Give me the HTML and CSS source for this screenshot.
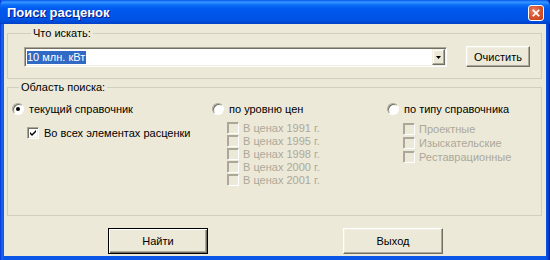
FILE: index.html
```html
<!DOCTYPE html>
<html lang="ru">
<head>
<meta charset="utf-8">
<title>Поиск расценок</title>
<link rel="stylesheet" href="styles.css">
</head>
<body>
<div class="window">
  <div class="titlebar">
    <span class="title">Поиск расценок</span>
    <span class="close">
      <svg width="16" height="16" viewBox="0 0 16 16"><path d="M5 5 L11 11 M11 5 L5 11" stroke="#fff" stroke-width="2" stroke-linecap="square"/></svg>
    </span>
  </div>
  <div class="client">
    <fieldset class="group g1">
      <legend>Что искать:</legend>
      <div class="search-row">
        <div class="combo">
          <span class="sel">10 млн. кВт</span>
          <span class="drop"><svg width="5" height="3" viewBox="0 0 5 3"><path d="M0 0H5L2.5 3Z" fill="#000"/></svg></span>
        </div>
        <button class="btn">Очистить</button>
      </div>
    </fieldset>
    <fieldset class="group g2">
      <legend>Область поиска:</legend>
      <div class="cols">
        <div class="col c1">
          <label class="opt"><span class="radio on"></span>текущий справочник</label>
          <div class="checks">
            <label class="opt"><span class="check on"><svg width="7" height="7" viewBox="0 0 7 7"><path d="M0 2 L2 4 L6 0 L6 2 L2 6 L0 4Z" fill="#000"/></svg></span>Во всех элементах расценки</label>
          </div>
        </div>
        <div class="col c2">
          <label class="opt"><span class="radio"></span>по уровню цен</label>
          <div class="checks">
            <label class="opt dis"><span class="check"></span>В ценах 1991 г.</label>
            <label class="opt dis"><span class="check"></span>В ценах 1995 г.</label>
            <label class="opt dis"><span class="check"></span>В ценах 1998 г.</label>
            <label class="opt dis"><span class="check"></span>В ценах 2000 г.</label>
            <label class="opt dis"><span class="check"></span>В ценах 2001 г.</label>
          </div>
        </div>
        <div class="col c3">
          <label class="opt"><span class="radio"></span>по типу справочника</label>
          <div class="checks">
            <label class="opt dis"><span class="check"></span>Проектные</label>
            <label class="opt dis"><span class="check"></span>Изыскательские</label>
            <label class="opt dis"><span class="check"></span>Реставрационные</label>
          </div>
        </div>
      </div>
    </fieldset>
    <div class="actions">
      <button class="btn big default">Найти</button>
      <button class="btn big">Выход</button>
    </div>
  </div>
</div>
</body>
</html>
```

FILE: styles.css
```css
html, body {
  margin: 0;
  padding: 0;
}
body {
  width: 550px;
  height: 260px;
  overflow: hidden;
  font-family: "Liberation Sans", Arial, sans-serif;
  font-size: 11px;
  color: #000;
}
.window {
  width: 550px;
  height: 260px;
  box-sizing: border-box;
  display: flex;
  flex-direction: column;
  background: linear-gradient(to right, #0831D9 0, #166AEE 2px, #0A56E6 4px, #0A56E6 546px, #0843D0 548px, #001EA0 550px);
}
.titlebar {
  height: 24px;
  flex: none;
  display: flex;
  align-items: center;
  justify-content: space-between;
  padding: 0 6px 0 7px;
  background: linear-gradient(to bottom, #0058EE 0, #3A93FF 2px, #288EFF 3px, #0A6DF7 5px, #0058EE 9px, #0055E8 16px, #0052E2 20px, #0046D0 23px, #003DC2 24px);
  border-radius: 6px 6px 0 0;
}
.title {
  color: #fff;
  font-weight: bold;
  font-size: 13px;
  text-shadow: 1px 1px #0A1883;
  margin-top: 1px;
}
.close {
  width: 16px;
  height: 16px;
  box-sizing: border-box;
  border: 1px solid #fff;
  border-radius: 3px;
  background: radial-gradient(circle at 35% 35%, #E8836A 0, #D9562F 45%, #C23F12 100%);
  display: flex;
  margin-top: 1px;
}
.close svg {
  width: 14px;
  height: 14px;
}
.client {
  flex: 1;
  margin: 0 4px 4px;
  background: #ECE9D8;
  display: flex;
  flex-direction: column;
}
.group {
  margin: 0 0 0 3px;
  width: 535px;
  box-sizing: border-box;
  border: 1px solid #D0D0BF;
  border-radius: 0;
  padding: 0;
  min-width: 0;
}
.group legend {
  margin-left: 7px;
  padding: 0 2px;
  line-height: 13px;
  font-size: 11px;
}
.g1 {
  margin-top: 3px;
  padding: 6px 0 11px 16px;
}
.search-row {
  display: flex;
  align-items: flex-start;
  gap: 19px;
}
.combo {
  width: 423px;
  height: 20px;
  margin-top: 1px;
  box-sizing: border-box;
  background: #fff;
  border: 1px solid;
  border-color: #ACA899 #fff #fff #ACA899;
  box-shadow: inset 1px 1px #716F64, inset -1px -1px #F1EFE2;
  display: flex;
  align-items: center;
  justify-content: space-between;
  padding: 0 1px 0 2px;
}
.sel {
  background: #316AC5;
  color: #fff;
  line-height: 13px;
  padding: 0 1px 0 0;
}
.drop {
  width: 13px;
  height: 16px;
  box-sizing: border-box;
  background: #ECE9D8;
  border: 1px solid;
  border-color: #F1EFE2 #716F64 #716F64 #F1EFE2;
  box-shadow: inset -1px -1px #ACA899, inset 1px 1px #fff;
  display: flex;
  align-items: center;
  justify-content: center;
}
.btn {
  font-family: "Liberation Sans", Arial, sans-serif;
  font-size: 11px;
  color: #000;
  background: #ECE9D8;
  border: 1px solid;
  border-color: #fff #716F64 #716F64 #fff;
  box-shadow: inset -1px -1px #ACA899, inset 1px 1px #F1EFE2;
  width: 64px;
  height: 21px;
  padding: 0;
  margin: 0;
  box-sizing: border-box;
}
.g2 {
  margin-top: 2px;
  height: 135px;
  padding: 9px 0 0 4px;
}
.cols {
  display: grid;
  grid-template-columns: 200px 175px 1fr;
}
.col {
  display: flex;
  flex-direction: column;
}
.opt {
  display: flex;
  align-items: center;
  gap: 5px;
  height: 12px;
  line-height: 12px;
  white-space: nowrap;
}
.radio {
  width: 12px;
  height: 12px;
  box-sizing: border-box;
  border-radius: 50%;
  border: 1px solid;
  border-color: #ACA899 #fff #fff #ACA899;
  box-shadow: inset 1px 1px #716F64;
  background: #fff;
  display: flex;
  align-items: center;
  justify-content: center;
  flex: none;
}
.radio.on::after {
  content: "";
  width: 4px;
  height: 4px;
  border-radius: 50%;
  background: #000;
}
.checks {
  display: flex;
  flex-direction: column;
  padding-left: 15px;
}
.c1 .checks {
  margin-top: 12px;
}
.c2 .checks {
  margin-top: 7px;
  gap: 1px;
}
.c3 .checks {
  margin-top: 8px;
  gap: 2px;
  padding-left: 16px;
}
.check {
  width: 12px;
  height: 12px;
  box-sizing: border-box;
  border: 1px solid;
  border-color: #ACA899 #fff #fff #ACA899;
  box-shadow: inset 1px 1px #716F64, inset -1px -1px #F1EFE2;
  background: #fff;
  display: flex;
  align-items: center;
  justify-content: center;
  flex: none;
}
.dis {
  color: #ACA899;
  gap: 4px;
}
.dis .check {
  background: #ECE9D8;
  box-shadow: inset 1px 1px #ACA899;
}
.actions {
  display: flex;
  gap: 135px;
  padding-left: 104px;
  margin-top: 12px;
}
.btn.big {
  width: 100px;
  height: 26px;
}
.btn.default {
  border: 1px solid #000;
  box-shadow: inset 1px 1px #fff, inset -1px -1px #716F64, inset -2px -2px #ACA899;
}
```
